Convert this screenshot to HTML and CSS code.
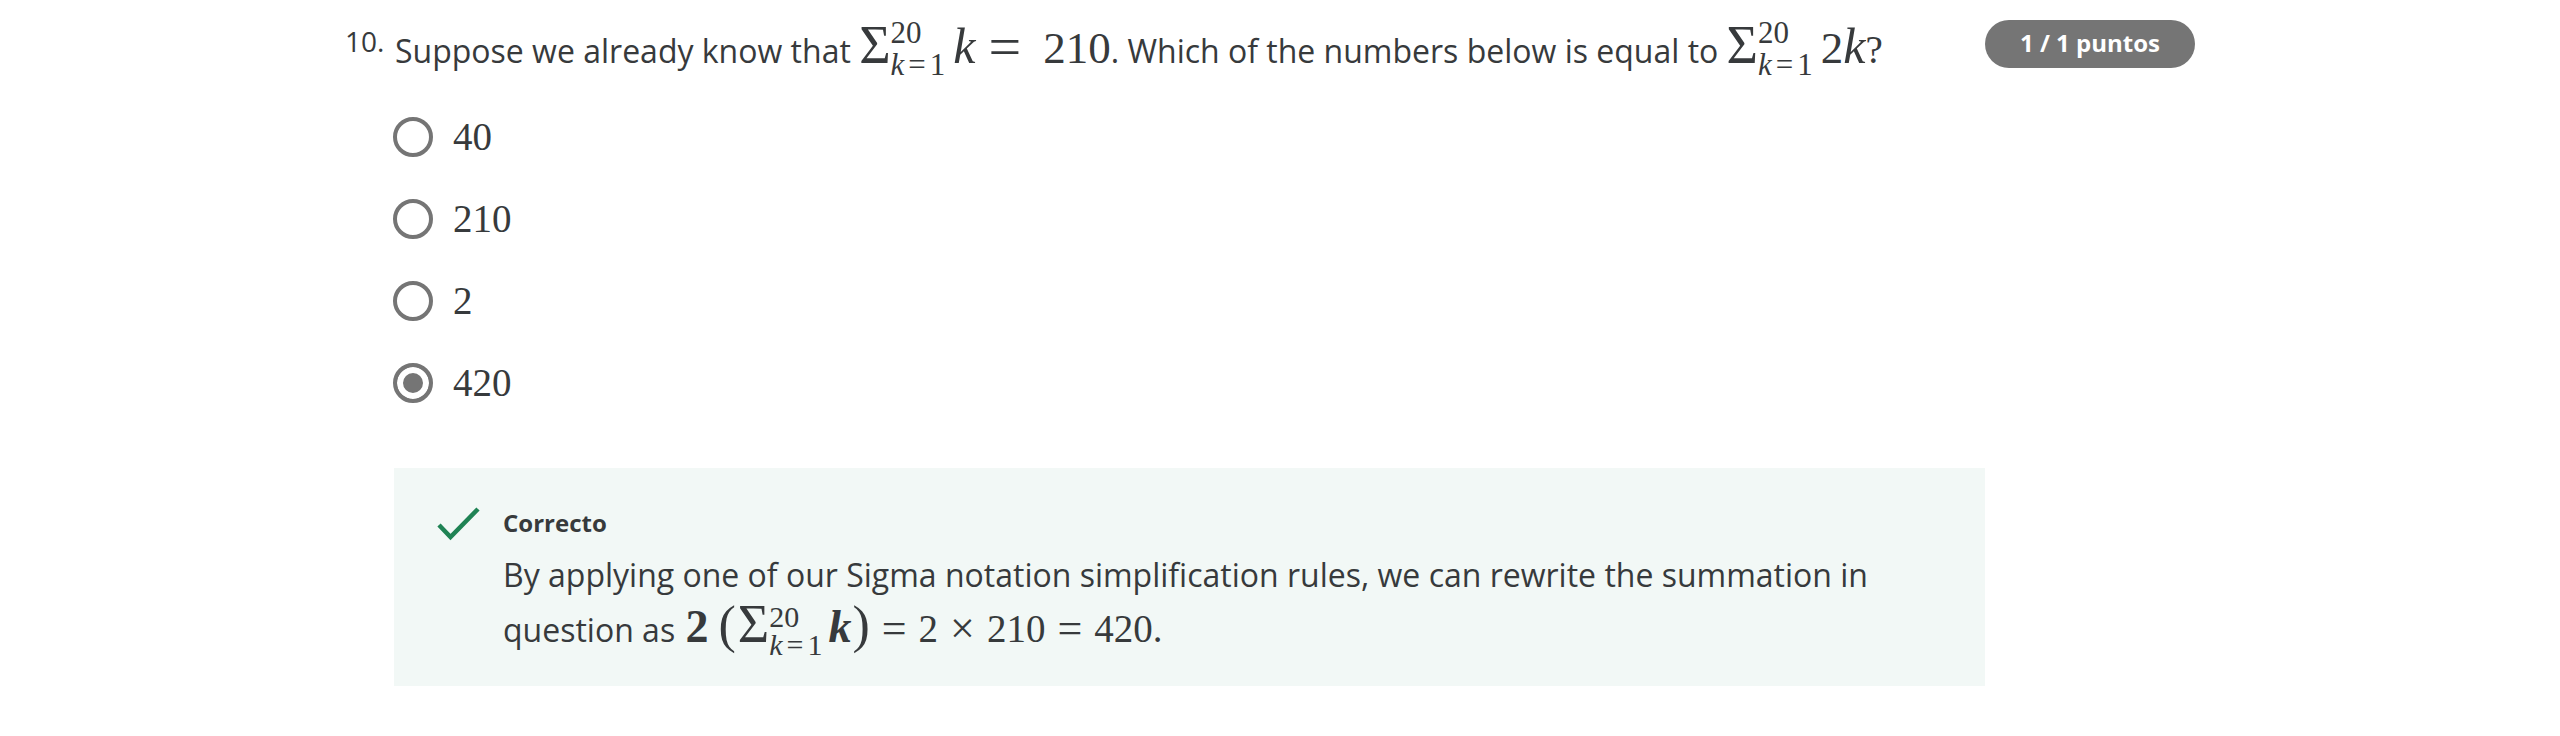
FILE: index.html
```html
<!DOCTYPE html>
<html lang="es">
<head>
  <meta charset="UTF-8">
  <title>Quiz</title>
  <link rel="stylesheet" href="styles.css">
</head>
<body>
  <div class="question">
    <div class="question-head">
      <span class="number">10.</span>
      <p class="prompt">Suppose we already know that <span class="math big"><span class="sum">Σ</span><span class="limits"><span>20</span><span class="lower"><i>k</i>=1</span></span><i class="var">k</i><span class="op">=</span>210</span>. Which of the numbers below is equal to <span class="math big"><span class="sum">Σ</span><span class="limits"><span>20</span><span class="lower"><i>k</i>=1</span></span>2<i class="var">k</i></span><span class="math">?</span></p>
      <span class="pill">1 / 1 puntos</span>
    </div>
    <div class="options">
      <div class="option"><span class="radio"></span><span class="math">40</span></div>
      <div class="option"><span class="radio"></span><span class="math">210</span></div>
      <div class="option"><span class="radio"></span><span class="math">2</span></div>
      <div class="option"><span class="radio checked"></span><span class="math">420</span></div>
    </div>
    <div class="feedback">
      <svg class="check" width="44" height="34" viewBox="0 0 44 34"><path d="M2 18 L13.500 30 L41 2" fill="none" stroke="#1f8354" stroke-width="4.500"/></svg>
      <div class="feedback-body">
        <div class="feedback-title">Correcto</div>
        <p class="feedback-text">By applying one of our Sigma notation simplification rules, we can rewrite the summation in<br>question as <span class="math big"><b>2</b><span class="paren">(</span><span class="sum">Σ</span><span class="limits"><span>20</span><span class="lower"><i>k</i>=1</span></span><i><b>k</b></i><span class="paren">)</span></span><span class="math"><span class="op">=</span>2<span class="op">×</span>210<span class="op">=</span>420.</span></p>
      </div>
    </div>
  </div>
</body>
</html>
```

FILE: styles.css
```css
body {
  margin: 0;
  background: #fff;
  color: #373a3c;
  font-family: "Open Sans", sans-serif;
}
p { margin: 0; }
.question { width: 1850px; margin-left: 345px; padding-top: 20px; }
.question-head { display: flex; align-items: flex-start; }
.number { width: 50px; font-size: 28px; line-height: 32px; margin-top: 5px; }
.prompt { width: 1590px; font-size: 32px; line-height: 48px; margin-top: 7px; white-space: nowrap; }
.prompt .math.big { font-size: 45px; }
.pill {
  width: 210px; height: 48px; border-radius: 24px;
  background: #757575; color: #fff;
  font-size: 24px; font-weight: 700; line-height: 46px; text-align: center;
}
.math { font-family: "Liberation Serif", serif; font-size: 39px; line-height: 0; }
.math.big { font-size: 46px; }
.sum { font-size: 54px; }
.limits {
  display: inline-flex; flex-direction: column;
  vertical-align: 20px; margin: -40px 4px -40px 0;
  font-size: 31px; line-height: 32px;
}
.lower { letter-spacing: 4px; }
.var { font-size: 50px; }
.op { margin: 0 22px 0 13px; font-size: 58px; vertical-align: -3px; }
.options { margin-top: 21px; margin-left: 48px; }
.option { display: flex; align-items: center; height: 82px; gap: 20px; }
.radio {
  box-sizing: border-box; width: 40px; height: 40px;
  border: 4px solid #757575; border-radius: 50%; background: #fff;
}
.radio.checked { background: #757575; box-shadow: inset 0 0 0 6px #fff; }
.feedback {
  display: flex; gap: 22px; width: 1591px; height: 218px; box-sizing: border-box;
  margin-top: 44px; margin-left: 49px; padding: 39px 43px;
  background: #f2f8f6;
}
.check { flex: none; }
.feedback-title { font-size: 24px; font-weight: 700; line-height: 32px; margin-bottom: 8px; }
.feedback-text { font-size: 32px; line-height: 55px; white-space: nowrap; }
.feedback-text .math.big { margin-left: 2px; }
.feedback-text .limits { vertical-align: 15px; line-height: 28px; margin-right: 2px; font-size: 30px; }
.feedback-text .op { font-size: 44px; margin: 0 12px; vertical-align: -1px; }
.paren { font-size: 52px; font-weight: 400; margin: 0 2px 0 10px; }
.paren:last-child { margin: 0 0 0 1px; }
```
